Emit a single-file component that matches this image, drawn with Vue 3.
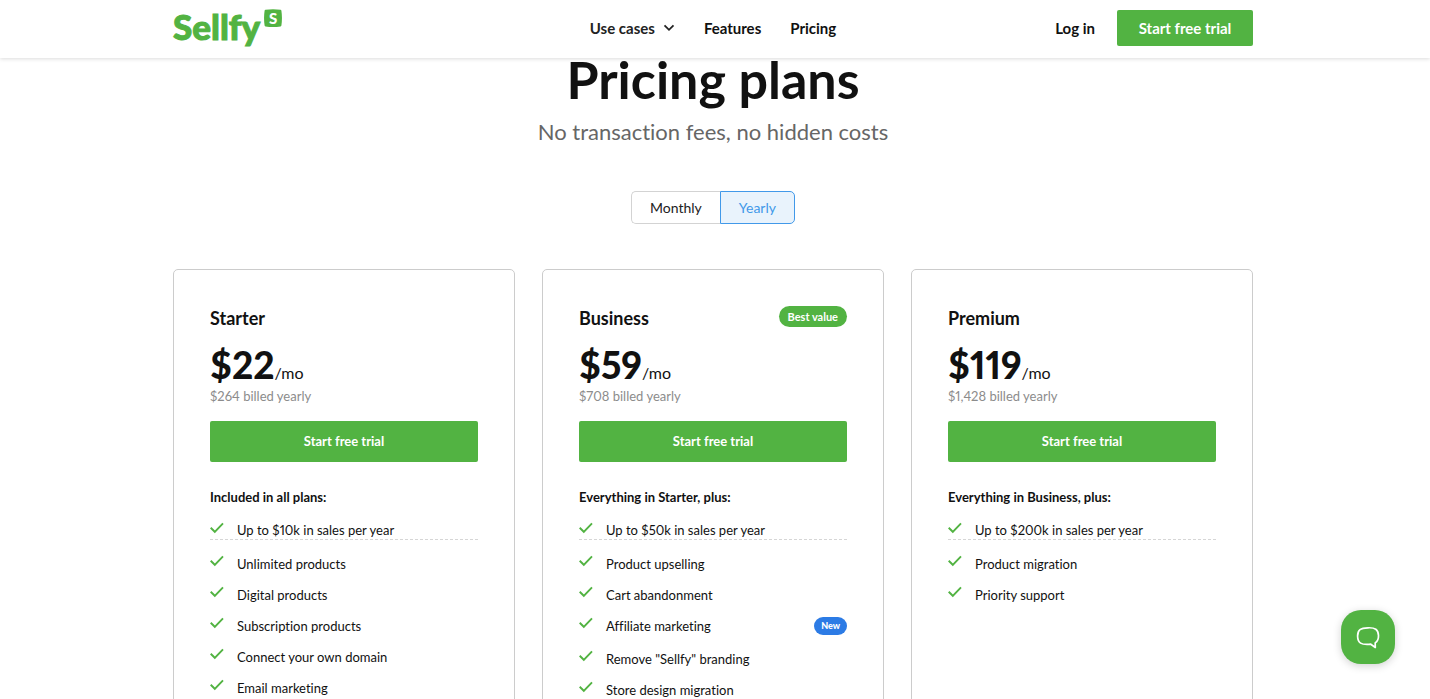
<script setup>
import { ref } from 'vue'

const billing = ref('yearly')

const plans = [
  {
    name: 'Starter',
    price: '$22',
    billed: '$264 billed yearly',
    intro: 'Included in all plans:',
    features: [
      { text: 'Up to $10k in sales per year' },
      { text: 'Unlimited products' },
      { text: 'Digital products' },
      { text: 'Subscription products' },
      { text: 'Connect your own domain' },
      { text: 'Email marketing' },
    ],
  },
  {
    name: 'Business',
    price: '$59',
    badge: 'Best value',
    billed: '$708 billed yearly',
    intro: 'Everything in Starter, plus:',
    features: [
      { text: 'Up to $50k in sales per year' },
      { text: 'Product upselling' },
      { text: 'Cart abandonment' },
      { text: 'Affiliate marketing', tag: 'New' },
      { text: 'Remove "Sellfy" branding' },
      { text: 'Store design migration' },
    ],
  },
  {
    name: 'Premium',
    price: '$119',
    billed: '$1,428 billed yearly',
    intro: 'Everything in Business, plus:',
    features: [
      { text: 'Up to $200k in sales per year' },
      { text: 'Product migration' },
      { text: 'Priority support' },
    ],
  },
]
</script>

<template>
  <div class="page">
    <header class="topbar">
      <div class="container topbar-inner">
        <a href="#" class="logo" aria-label="Sellfy home">
          <span class="logo-word">Sellfy</span>
          <span class="logo-mark">
            <svg viewBox="0 0 18 18" width="18" height="18" aria-hidden="true">
              <path d="M1.500 .7Q9-.4 16.500 .7Q17.300 .8 17.400 1.700Q18.500 9 17.400 16.500Q17.300 17.300 16.500 17.400Q9 18.400 1.500 17.400Q.7 17.300 .6 16.500Q-.5 9 .6 1.700Q.7 .8 1.500 .7Z" fill="#52b342" />
            </svg>
            <span class="logo-s">S</span>
          </span>
        </a>
        <nav class="nav">
          <button type="button" class="nav-item nav-drop">
            Use cases
            <svg viewBox="0 0 12 8" width="12" height="8" aria-hidden="true">
              <path d="M1.500 1.300L6 5.800L10.500 1.300" fill="none" stroke="#222" stroke-width="1.800" />
            </svg>
          </button>
          <a href="#" class="nav-item">Features</a>
          <a href="#" class="nav-item">Pricing</a>
        </nav>
        <div class="account">
          <a href="#" class="nav-item">Log in</a>
          <button type="button" class="cta cta-small">Start free trial</button>
        </div>
      </div>
    </header>

    <main>
      <div class="container">
        <h1>Pricing plans</h1>
        <p class="subtitle">No transaction fees, no hidden costs</p>

        <div class="switch" role="group" aria-label="Billing period">
          <button type="button" :class="{ active: billing === 'monthly' }" @click="billing = 'monthly'">Monthly</button>
          <button type="button" :class="{ active: billing === 'yearly' }" @click="billing = 'yearly'">Yearly</button>
        </div>

        <div class="plans">
          <section v-for="plan in plans" :key="plan.name" class="plan">
            <div class="plan-head">
              <h2>{{ plan.name }}</h2>
              <span v-if="plan.badge" class="badge">{{ plan.badge }}</span>
            </div>
            <p class="price"><strong>{{ plan.price }}</strong><span>/mo</span></p>
            <p class="billed">{{ plan.billed }}</p>
            <button type="button" class="cta cta-wide">Start free trial</button>
            <h3>{{ plan.intro }}</h3>
            <ul>
              <li v-for="feature in plan.features" :key="feature.text">
                <svg viewBox="0 0 14 12" width="14" height="12" aria-hidden="true">
                  <path d="M.7 5.800L4.800 9.800L13 1.300" fill="none" stroke="#52b342" stroke-width="1.900" />
                </svg>
                <span class="feature">{{ feature.text }}</span>
                <span v-if="feature.tag" class="tag">{{ feature.tag }}</span>
              </li>
            </ul>
          </section>
        </div>
      </div>
    </main>

    <button type="button" class="chat" aria-label="Open chat">
      <svg viewBox="0 0 24 24" width="24" height="24" aria-hidden="true">
        <path d="M12 2.800C19 2.500 22.300 4.500 22.500 10.500C22.600 14 21.300 16.500 19.200 17.900L19.300 22.500L14.800 19.200C5 20.200 1.700 18 1.600 11C1.600 4.800 4.500 3 12 2.800Z" fill="none" stroke="#fff" stroke-width="1.700" stroke-linejoin="round" />
      </svg>
    </button>
  </div>
</template>

<style>
html {
  scrollbar-width: none;
}
body {
  margin: 0;
  background: #fff;
}
</style>

<style scoped>
.page {
  font-family: Lato, "Open Sans", sans-serif;
  font-variant-ligatures: none;
  font-variant-numeric: proportional-nums;
  color: #111;
  font-size: 13px;
}
h1, h2, h3, p, ul {
  margin: 0;
  padding: 0;
}
button {
  font-family: inherit;
  cursor: pointer;
}
.container {
  width: calc(100% - 44px);
  max-width: 1080px;
  margin: 0 auto;
}
.topbar,
main {
  padding-right: 4px;
}
.topbar {
  position: sticky;
  top: 0;
  z-index: 2;
  padding-bottom: 2px;
  background: #fff;
  box-shadow: 0 1px 4px rgba(0, 0, 0, 0.14);
}
.topbar-inner {
  display: grid;
  grid-template-columns: 1fr auto 1fr;
  align-items: center;
  height: 56px;
}
.logo {
  display: flex;
  align-items: flex-start;
  gap: 4px;
  height: 38px;
  color: #52b342;
  text-decoration: none;
}
.logo-word {
  font-size: 35px;
  font-weight: 900;
  line-height: 34px;
  -webkit-text-stroke: 1px #52b342;
}
.logo-mark {
  display: grid;
}
.logo-mark > * {
  grid-area: 1 / 1;
}
.logo-s {
  color: #fff;
  font-size: 15px;
  font-weight: 900;
  line-height: 18px;
  text-align: center;
}
.nav {
  display: flex;
  gap: 29px;
}
.nav-item {
  padding: 0;
  border: 0;
  background: none;
  color: #111;
  font-size: 15px;
  font-weight: 700;
  line-height: 20px;
  text-decoration: none;
}
.nav-drop {
  display: flex;
  align-items: center;
  gap: 8px;
  color: #222;
}
.account {
  display: flex;
  justify-content: flex-end;
  align-items: center;
  gap: 22px;
}
.cta {
  border: 0;
  border-radius: 2px;
  background: #52b342;
  color: #fff;
  font-size: 13px;
  font-weight: 700;
}
.cta-small {
  width: 136px;
  height: 36px;
  padding: 0;
  font-size: 15px;
}
h1 {
  font-size: 52px;
  font-weight: 700;
  line-height: 42px;
  text-align: center;
}
.subtitle {
  margin-top: 18px;
  color: #666;
  font-size: 22px;
  line-height: 28px;
  text-align: center;
}
.switch {
  display: flex;
  justify-content: center;
  margin-top: 45px;
}
.switch button {
  height: 33px;
  padding: 0 18px;
  border: 1px solid #d3d3d3;
  background: #fff;
  color: #222;
  font-size: 14px;
}
.switch button:first-child {
  border-right: 0;
  border-radius: 5px 0 0 5px;
}
.switch button:last-child {
  border-radius: 0 5px 5px 0;
}
.switch .active {
  border-color: #4299e9;
  background: #e9f3fc;
  color: #4299e9;
}
.plans {
  display: grid;
  grid-template-columns: repeat(3, 1fr);
  gap: 27px;
  margin-top: 45px;
  padding-bottom: 40px;
}
.plan {
  padding: 36px;
  border: 1px solid #ccc;
  border-radius: 5px;
}
.plan-head {
  display: flex;
  justify-content: space-between;
  align-items: flex-start;
}
h2 {
  font-size: 18px;
  font-weight: 700;
  line-height: 24px;
}
.badge {
  padding: 0 9px;
  border-radius: 11px;
  background: #52b342;
  color: #fff;
  font-size: 11px;
  font-weight: 700;
  line-height: 21px;
}
.price {
  margin-top: 17px;
  line-height: 20px;
}
.price strong {
  font-size: 37px;
  font-weight: 900;
  line-height: 36px;
}
.price span {
  font-size: 16px;
}
.billed {
  margin-top: 4px;
  color: #8c8c8c;
  line-height: 16px;
}
.cta-wide {
  width: 100%;
  height: 41px;
  padding: 0 0 2px;
  margin-top: 17px;
}
h3 {
  margin-top: 27px;
  font-size: 13px;
  font-weight: 700;
  line-height: 16px;
}
ul {
  margin-top: 17px;
  list-style: none;
}
li {
  display: flex;
  align-items: flex-start;
  gap: 13px;
  margin-bottom: 13px;
  line-height: 18px;
}
li:first-child {
  margin-bottom: 15px;
  border-bottom: 1px dashed #d6d6d6;
  line-height: 17px;
}
.feature {
  flex: 1;
}
.tag {
  margin-bottom: 2px;
  padding: 0 7px;
  border-radius: 9px;
  background: #2c7be5;
  color: #fff;
  font-size: 9px;
  font-weight: 900;
}
.chat {
  position: fixed;
  right: 35px;
  bottom: 35px;
  z-index: 3;
  display: grid;
  place-items: center;
  width: 54px;
  height: 54px;
  padding: 0;
  border: 0;
  border-radius: 20px;
  background: #52b342;
  box-shadow: 0 2px 8px rgba(0, 0, 0, 0.18);
}
</style>
